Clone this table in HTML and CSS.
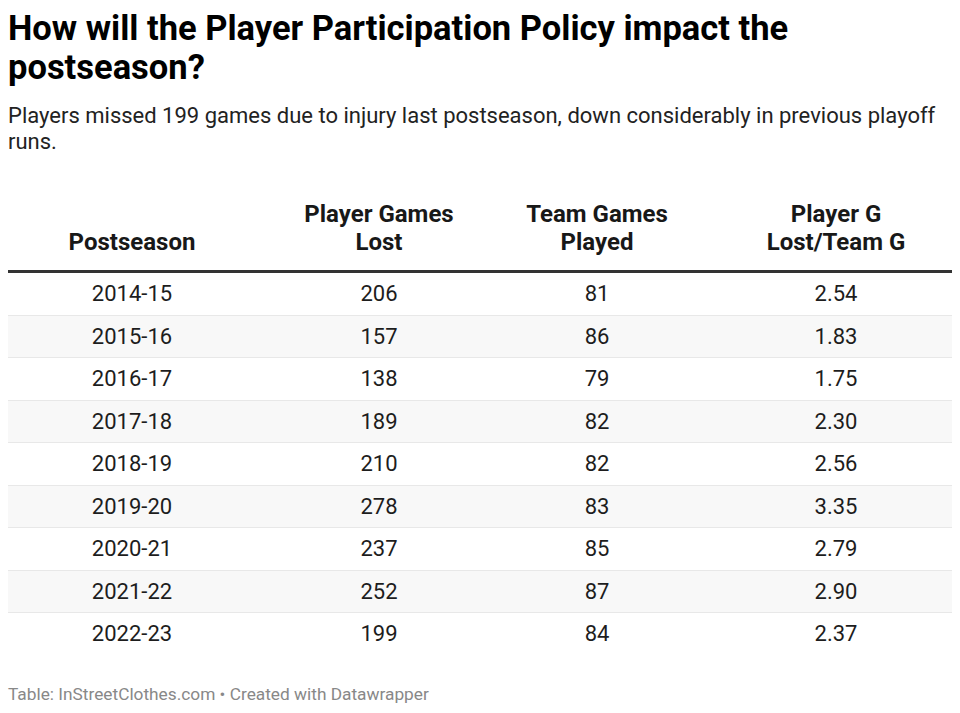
FILE: index.html
```html
<!DOCTYPE html>
<html>
<head>
<meta charset="utf-8">
<link rel="stylesheet" href="styles.css">
</head>
<body>
<div class="chart">
  <h1 class="title">How will the Player Participation Policy impact the postseason?</h1>
  <p class="subtitle">Players missed 199 games due to injury last postseason, down considerably in previous playoff runs.</p>
  <table class="data">
    <colgroup>
      <col class="c1"><col class="c2"><col class="c3"><col class="c4">
    </colgroup>
    <thead>
      <tr>
        <th>Postseason</th>
        <th>Player Games<br>Lost</th>
        <th>Team Games<br>Played</th>
        <th class="last">Player G<br>Lost/Team G</th>
      </tr>
    </thead>
    <tbody>
      <tr><td>2014-15</td><td>206</td><td>81</td><td class="last">2.54</td></tr>
      <tr><td>2015-16</td><td>157</td><td>86</td><td class="last">1.83</td></tr>
      <tr><td>2016-17</td><td>138</td><td>79</td><td class="last">1.75</td></tr>
      <tr><td>2017-18</td><td>189</td><td>82</td><td class="last">2.30</td></tr>
      <tr><td>2018-19</td><td>210</td><td>82</td><td class="last">2.56</td></tr>
      <tr><td>2019-20</td><td>278</td><td>83</td><td class="last">3.35</td></tr>
      <tr><td>2020-21</td><td>237</td><td>85</td><td class="last">2.79</td></tr>
      <tr><td>2021-22</td><td>252</td><td>87</td><td class="last">2.90</td></tr>
      <tr><td>2022-23</td><td>199</td><td>84</td><td class="last">2.37</td></tr>
    </tbody>
  </table>
  <p class="footer">Table: InStreetClothes.com • Created with Datawrapper</p>
</div>
</body>
</html>
```

FILE: styles.css
```css
html, body {
  margin: 0;
  padding: 0;
  background: #ffffff;
}
body {
  font-family: Roboto, "Liberation Sans", sans-serif;
  color: #181818;
}
.chart {
  padding: 9px 8px 0 8px;
}
.title {
  margin: 0;
  font-size: 34.5px;
  line-height: 39px;
  font-weight: 700;
  color: #000;
}
.subtitle {
  margin: 16px 0 0 0;
  font-size: 22px;
  line-height: 26px;
  color: #222;
}
.data {
  width: 944px;
  border-collapse: collapse;
  table-layout: fixed;
  margin-top: 45px;
}
.c1 { width: 248px; }
.c2 { width: 246px; }
.c3 { width: 190px; }
.c4 { width: 260px; }
.data th {
  font-size: 24px;
  line-height: 28px;
  font-weight: 700;
  color: #181818;
  text-align: center;
  vertical-align: bottom;
  padding: 0 0 14px 0;
  border-bottom: 3px solid #333;
}
.data td {
  font-size: 22px;
  text-align: center;
  height: 41.5px;
  padding: 0;
  color: #1d1d1d;
  border-bottom: 1px solid #e8e8e8;
}
.data .last {
  padding-left: 28px;
}
.data tbody tr:nth-child(even) td {
  background: #f8f8f8;
}
.data tbody tr:last-child td {
  border-bottom: none;
}
.footer {
  margin: 29px 0 0 0;
  font-size: 17.3px;
  color: #888;
}
```
